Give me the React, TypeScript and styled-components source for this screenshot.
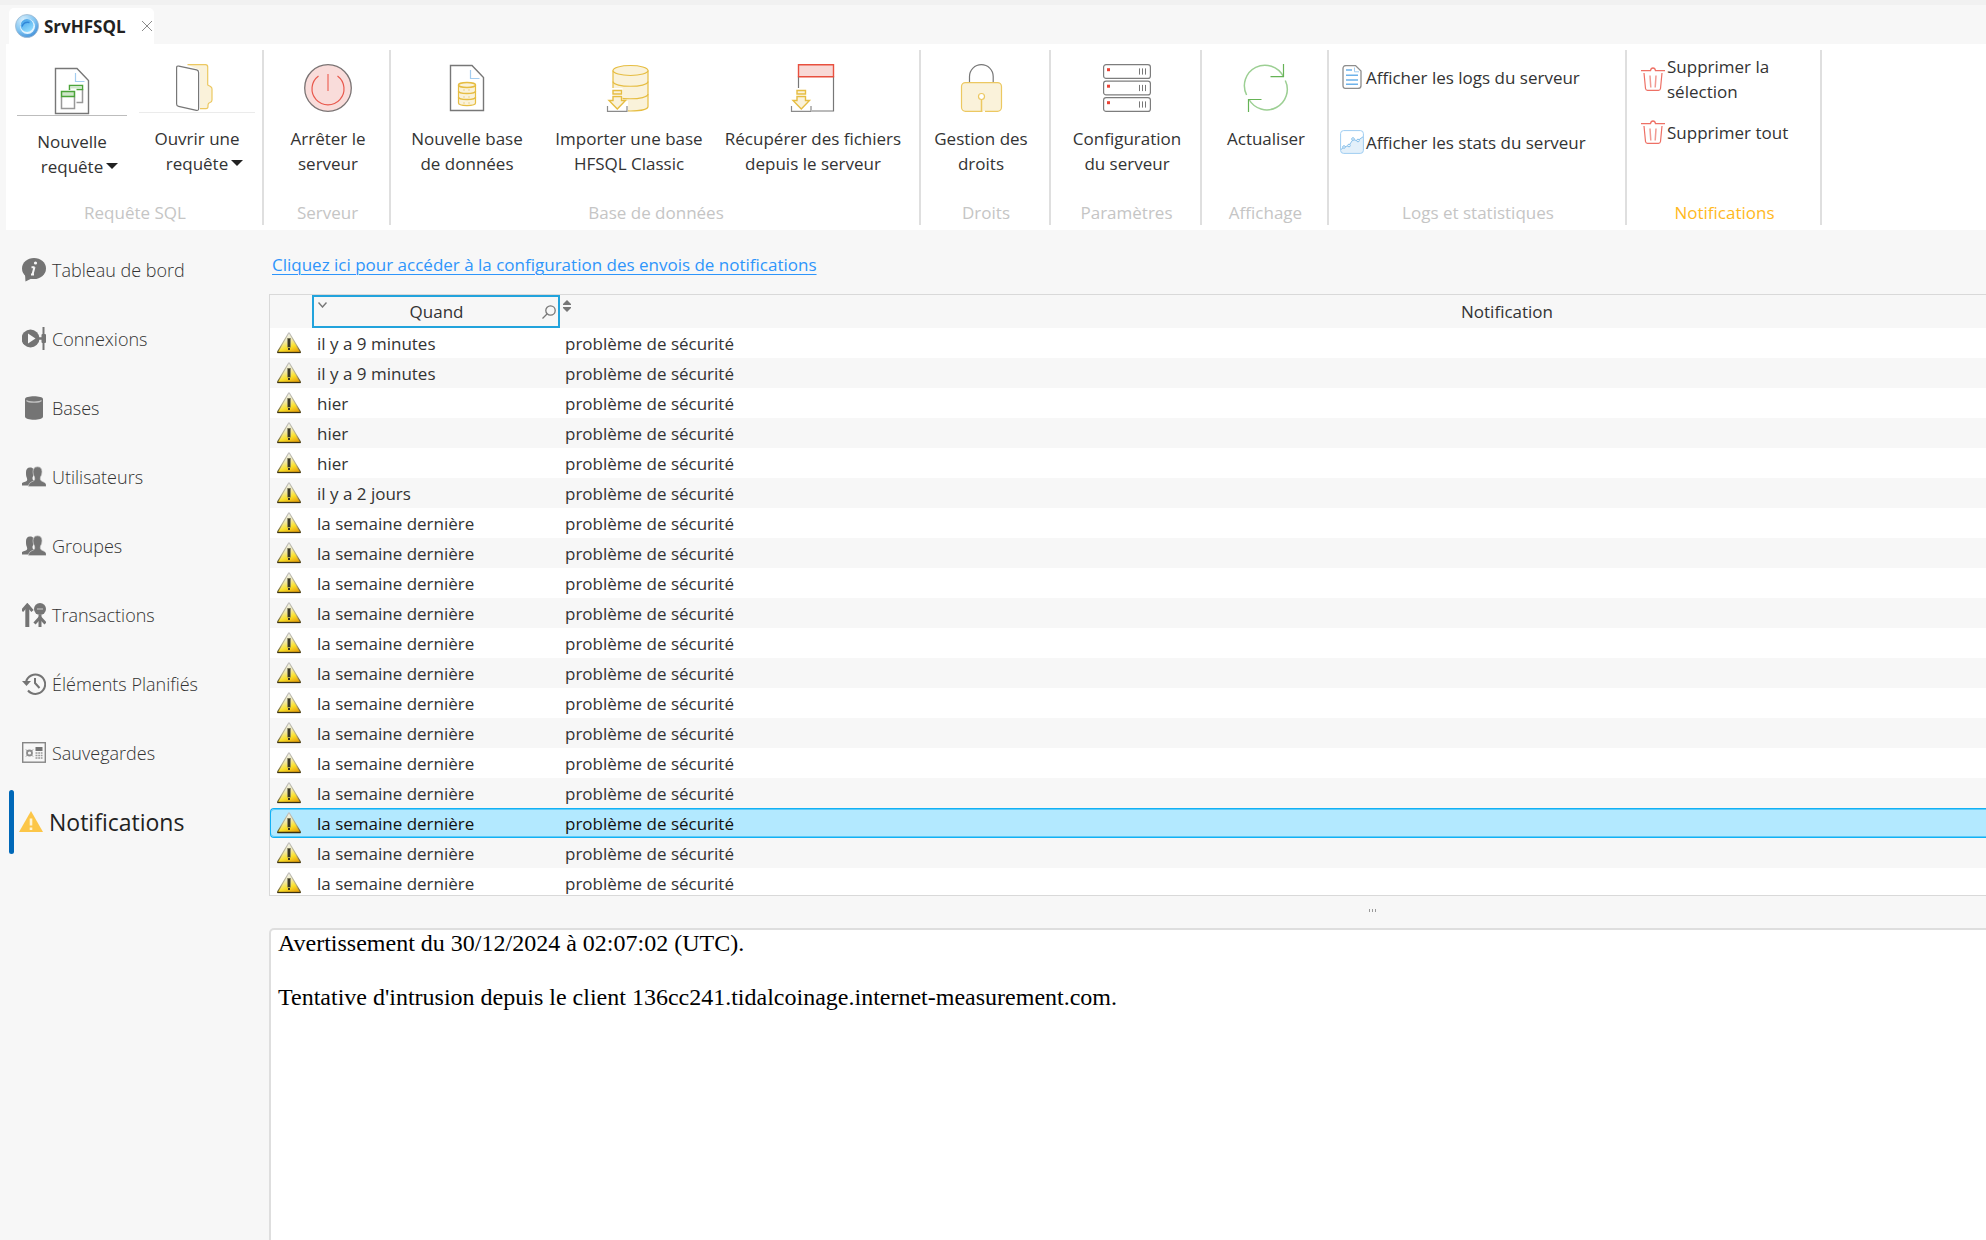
import React from "react";
import styled, { createGlobalStyle, css } from "styled-components";

const GlobalStyle = createGlobalStyle`
  *, *::before, *::after { box-sizing: border-box; }
  html, body { margin: 0; }
  body {
    background: #f7f7f7;
    color: #333;
    font-family: "Open Sans", "Noto Sans", sans-serif;
    font-size: 17px;
    line-height: 25px;
    overflow: hidden;
  }
  button {
    font: inherit;
    color: inherit;
    background: none;
    border: 0;
    padding: 0;
    margin: 0;
    cursor: pointer;
  }
  svg { display: block; flex: none; }
`;

/* ---------- layout ---------- */

const Window = styled.div`
  display: flex;
  flex-direction: column;
  height: 100vh;
  border-top: 5px solid #f1f1f1;
`;

const TabBar = styled.div`
  display: flex;
  padding: 3px 9px 0;
  flex: none;
`;

const Tab = styled.div`
  display: flex;
  align-items: center;
  height: 36px;
  padding: 0 2px 0 6px;
  background: #fff;
  border-radius: 5px 5px 0 0;
`;

const TabTitle = styled.button`
  display: flex;
  align-items: center;
  gap: 5px;
  width: 127px;
  line-height: 27px;
  font-weight: 700;
  color: #222;
`;

const CloseButton = styled.button`
  width: 10px;
  height: 10px;
`;

const Ribbon = styled.div`
  display: flex;
  flex: none;
  margin-left: 6px;
  padding: 6px 0 5px;
  background: #fff;
`;

const Group = styled.section<{ $width: number }>`
  display: flex;
  flex-direction: column;
  justify-content: space-between;
  width: ${(p) => p.$width}px;
  height: 175px;
  border-right: 2px solid #dfdfdf;
`;

const GroupName = styled.h2<{ $active?: boolean }>`
  margin: 0;
  padding-left: 2px;
  font-size: 17px;
  font-weight: 400;
  line-height: 25px;
  text-align: center;
  color: ${(p) => (p.$active ? "#ffb91d" : "#c5c5c5")};
`;

const BigTools = styled.div<{ $start: number; $gap?: number }>`
  display: flex;
  gap: ${(p) => p.$gap ?? 0}px;
  padding: 14px 0 0 ${(p) => p.$start}px;
`;

const BigButton = styled.button<{ $width: number; $lowered?: boolean }>`
  display: flex;
  flex-direction: column;
  align-items: center;
  gap: 13px;
  width: ${(p) => p.$width}px;
  padding-top: ${(p) => (p.$lowered ? 3 : 0)}px;
  white-space: pre-line;
`;

const IconShelf = styled.span<{ $rule?: string }>`
  display: flex;
  justify-content: center;
  align-self: stretch;
  border-bottom: 1px solid ${(p) => p.$rule ?? "transparent"};
`;

const Caret = styled.span`
  display: inline-block;
  margin: 0 -15px 4px 3px;
  border: solid transparent;
  border-width: 6px 6px 0;
  border-top-color: #222;
`;

const SmallTools = styled.div<{ $top: number; $start: number; $gap: number }>`
  display: flex;
  flex-direction: column;
  align-items: flex-start;
  gap: ${(p) => p.$gap}px;
  padding: ${(p) => p.$top}px 0 0 ${(p) => p.$start}px;
`;

const SmallButton = styled.button<{ $width?: number }>`
  display: flex;
  align-items: center;
  gap: 2px;
  height: 50px;
  max-width: ${(p) => (p.$width ? `${p.$width}px` : "none")};
  text-align: left;
`;

const Body = styled.div`
  display: flex;
  flex: 1;
  min-height: 0;
`;

const Sidebar = styled.nav`
  display: flex;
  flex-direction: column;
  flex: none;
  width: 269px;
  padding-top: 5px;
`;

const NavLink = styled.a<{ $current?: boolean }>`
  display: flex;
  align-items: center;
  gap: 6px;
  height: 69px;
  padding-left: 22px;
  font-size: 18px;
  line-height: 27px;
  font-weight: 300;
  color: #333;
  text-decoration: none;
  span { padding-top: 2px; }
  ${(p) =>
    p.$current &&
    css`
      padding-left: 9px;
      font-size: 23px;
      font-weight: 400;
      color: #222;
      &::before {
        content: "";
        width: 5px;
        height: 64px;
        margin-right: -1px;
        border-radius: 3px;
        background: #0068b8;
      }
    `}
`;

const Main = styled.main`
  flex: 1;
  min-width: 0;
  overflow: hidden;
`;

/* The panes keep the width of the maximised window and are clipped on the right. */
const Panes = styled.div`
  display: flex;
  flex-direction: column;
  min-width: 2206px;
  height: 100%;
`;

const SettingsLine = styled.div`
  flex: none;
  height: 64px;
  padding: 22px 3px 0;
`;

const SettingsLink = styled.a`
  color: #2e95fb;
  text-decoration: underline;
  text-decoration-thickness: 1px;
  text-underline-offset: 3px;
`;

const TablePane = styled.div`
  flex: none;
  height: 602px;
  overflow: hidden;
  border: 1px solid #d9d9d9;
`;

const Table = styled.table`
  width: 100%;
  table-layout: fixed;
  border-collapse: separate;
  border-spacing: 0;
`;

const HeadCell = styled.th<{ $width?: number }>`
  width: ${(p) => (p.$width ? `${p.$width}px` : "auto")};
  height: 33px;
  padding: 0;
  font-weight: 400;
  text-align: center;
  vertical-align: middle;
`;

const SortedHead = styled.div`
  display: grid;
  grid-template-columns: 22px 1fr 22px;
  align-items: center;
  height: 33px;
  padding: 0 2px 0 3px;
  border: 2px solid #22a3dc;
`;

const TopButton = styled.button`
  align-self: start;
  justify-self: start;
  padding: 5px 0 0 1px;
`;

const SearchButton = styled.button`
  justify-self: end;
`;

const FreeHead = styled.div`
  display: grid;
  grid-template-columns: 14px 1fr 36px;
  align-items: center;
  height: 33px;
  padding-left: 2px;
`;

const Row = styled.tr<{ $selected?: boolean }>`
  background: #fff;
  &:nth-child(even) { background: #f7f7f7; }
  ${(p) =>
    p.$selected &&
    css`
      && { background: transparent; color: #111; }
      td {
        background: #b3e9ff;
        border: solid #12b1f5;
        border-width: 1px 0;
        box-shadow: inset 0 1px #5ecbf8, inset 0 -1px #5ecbf8;
      }
      td:first-child {
        padding-left: 6px;
        border-left-width: 1px;
        border-radius: 4px 0 0 4px;
      }
    `}
`;

const Cell = styled.td<{ $icon?: boolean }>`
  height: 30px;
  padding: 0 0 0 ${(p) => (p.$icon ? 7 : 5)}px;
  overflow: hidden;
  white-space: nowrap;
`;

const Splitter = styled.div`
  display: flex;
  justify-content: center;
  gap: 2px;
  flex: none;
  height: 32px;
  padding-top: 13px;
`;

const Grip = styled.i`
  width: 1px;
  height: 3px;
  background: #9a9a9a;
`;

const Detail = styled.article`
  flex: 1;
  padding: 0 7px;
  background: #fff;
  border: 2px solid #dedede;
  border-bottom: 0;
  border-radius: 5px 5px 0 0;
  color: #000;
  font-family: "Liberation Serif", "Times New Roman", serif;
  font-size: 24px;
  line-height: 27px;
`;

const DetailLine = styled.p`
  margin: 0 0 27px;
`;

/* ---------- tab and ribbon icons ---------- */

const OrbIcon = () => (
  <svg width="24" height="24" viewBox="0 0 24 24" fill="none">
    <defs>
      <radialGradient id="orbRim" cx="0.35" cy="0.25" r="0.9">
        <stop offset="0" stopColor="#d8effc" />
        <stop offset="0.55" stopColor="#7fc4f2" />
        <stop offset="1" stopColor="#2a7bd0" />
      </radialGradient>
      <linearGradient id="orbCore" x1="0" y1="0" x2="0.6" y2="1">
        <stop offset="0" stopColor="#3d9be6" />
        <stop offset="1" stopColor="#8fdcff" />
      </linearGradient>
    </defs>
    <circle cx="12" cy="12" r="11.5" fill="url(#orbRim)" stroke="#9fb9cf" strokeWidth="0.8" />
    <circle cx="12.5" cy="12.5" r="7.5" fill="#e3f4ff" />
    <circle cx="12" cy="11.500" r="6.500" fill="url(#orbCore)" />
    <path d="M7 12.500c1-3.500 4-5 7.500-4" stroke="#2f86d8" strokeWidth="1.500" />
  </svg>
);

const CloseIcon = () => (
  <svg width="10" height="10" viewBox="0 0 10 10" stroke="#8a8a8a">
    <path d="M0 0l10 10M10 0L0 10" />
  </svg>
);

const Big = ({ children }: { children: React.ReactNode }) => (
  <svg width="48" height="48" viewBox="0 0 48 48" fill="none" strokeWidth="1.2">
    {children}
  </svg>
);

const Sheet = () => (
  <>
    <path d="M7.500 1.500h21.500l11.500 12v33h-33z" stroke="#777" fill="#fff" strokeWidth="1.4" />
    <path d="M27.500 6v8.500h9" stroke="#a3cdf0" />
  </>
);

const NewQueryIcon = () => (
  <Big>
    <Sheet />
    <path d="M34.500 22v13.500h-6" stroke="#999" strokeWidth="1.500" />
    <path d="M21.500 23v-4.500h13v4h-6" stroke="#4ba43a" strokeWidth="1.500" />
    <path d="M22 19.500h12v2h-12z" fill="#cfe6ca" />
    <path d="M13.500 30v11.500h13V30" stroke="#999" strokeWidth="1.500" />
    <path d="M13.500 24.500h13v5h-13z" stroke="#4ba43a" fill="#cfe6ca" strokeWidth="1.500" />
  </Big>
);

const FolderIcon = () => (
  <Big>
    <path
      d="M14.500.7H32.500q2.200 0 2.200 2.200V21l2.800 1.500q1.500 1 1.500 2.500V36q0 2-2 2.500t-2 2.500v1.500q0 2.200-2 2.200h-6V7.500q0-1.500-1.500-2z"
      fill="#faf2da"
    />
    <path
      d="M14.500.7H32.500q2.200 0 2.200 2.200V21l2.800 1.500q1.500 1 1.500 2.500V36q0 2-2 2.500t-2 2.500v1.500q0 2.200-2 2.200h-6"
      stroke="#ecc861"
    />
    <path d="M3.600 4q0-2.400 2.200-1.900l17.800 3.800q2 .5 2 2.500v36q0 2.500-2.200 2L5.600 42.300q-2-.5-2-2.400z" stroke="#777" fill="#fff" />
  </Big>
);

const PowerIcon = () => (
  <Big>
    <circle cx="24" cy="24" r="23.300" fill="#f9dcda" stroke="#7b7474" strokeWidth="1.300" />
    <path d="M14.500 12a16 16 0 1 0 19 0" stroke="#e9594d" />
    <path d="M24 10v17" stroke="#f2958d" strokeWidth="2" />
  </Big>
);

const NewBaseIcon = () => (
  <Big>
    <Sheet />
    <path d="M15.500 21v18c0 3.400 17 3.400 17 0V21" fill="#faf2da" stroke="#e6bd42" />
    <ellipse cx="24" cy="21" rx="8.500" ry="2.500" fill="#faf2da" stroke="#e6bd42" strokeWidth="1.500" />
    <path d="M15.500 27c0 3.400 17 3.400 17 0M15.500 33c0 3.400 17 3.400 17 0" stroke="#e6bd42" strokeWidth="1.500" />
    <path d="M20 26h2m3 0h2M20 33h2m3 0h2M20 39h2m3 0h2" stroke="#efd68a" />
  </Big>
);

const DownloadMark = () => (
  <>
    <path d="M0 24h17.500v13H23v11H0z" fill="#fff" />
    <path d="M8 26.500h8.500V30H8zM8 32.500h8.500v4h4L12.300 45 4 36.500h4z" fill="#faf2da" stroke="#e6bd42" strokeWidth="1.400" />
    <path d="M2.500 42v5.300h19.500V42" stroke="#8b8b8b" />
  </>
);

const ImportBaseIcon = () => (
  <Big>
    <path d="M8 6.500v36c0 6 35 6 35 0v-36" fill="#faf2da" stroke="#e6bd42" />
    <ellipse cx="25.500" cy="6.500" rx="17.500" ry="5" fill="#faf2da" stroke="#e6bd42" />
    <path d="M8 17.500c0 6.300 35 6.300 35 0M8 30c0 6.300 35 6.300 35 0" stroke="#e6bd42" />
    <DownloadMark />
  </Big>
);

const FetchFilesIcon = () => (
  <Big>
    <path d="M9.500 12v35h35V12" fill="#fff" stroke="#777" />
    <path d="M9.500.7h35v12h-35z" fill="#f8d9d6" stroke="#e8503f" strokeWidth="1.400" />
    <DownloadMark />
  </Big>
);

const LockIcon = () => (
  <Big>
    <path d="M12.500 20v-7.500a11.800 11.800 0 0 1 23.700 0V20" stroke="#777" />
    <rect x="4.500" y="18.600" width="40" height="28.700" rx="4" fill="#faf2da" stroke="#ecc861" />
    <path d="M24.500 35v12" stroke="#ecc861" strokeWidth="1.500" />
    <path d="M25.500 47.300h2.500" stroke="#fff" strokeWidth="1.500" />
    <circle cx="24.500" cy="32.500" r="3" fill="#fff" stroke="#ecc861" />
  </Big>
);

const ServerIcon = () => (
  <Big>
    {[0.6, 17.1, 33.6].map((y) => (
      <g key={y}>
        <rect x="0.600" y={y} width="46.800" height="13.800" rx="2.500" fill="#fff" stroke="#7d7d7d" />
        <rect x="4" y={y + 3.6} width="3" height="3" fill="#ea4335" />
        <path d={`M36.500 ${y + 3.8}v6.200M39.500 ${y + 3.8}v6.200M42.500 ${y + 3.8}v6.200`} stroke="#777" strokeWidth="1" />
      </g>
    ))}
  </Big>
);

const RefreshIcon = () => (
  <Big>
    <path d="M43.300 16.500A20.500 20.500 0 0 1 7 35.500M4.600 31A20.500 20.500 0 0 1 41.300 12.500" stroke="#9ccf93" strokeWidth="1.500" />
    <path d="M41.500 0v12.700h-13M6.500 48V35.500h13" stroke="#66b356" />
  </Big>
);

const Small = ({ children }: { children: React.ReactNode }) => (
  <svg width="24" height="24" viewBox="0 0 24 24" fill="none">
    {children}
  </svg>
);

const LogsIcon = () => (
  <Small>
    <path d="M6 .6h9.500L21 6v14.400q0 3-3 3H6q-3 0-3-3V3.600q0-3 3-3z" stroke="#8d8d8d" fill="#fff" strokeWidth="1.300" />
    <path d="M14.500 2.500v4.300h4.500" stroke="#a3cdf0" />
    <path d="M6 5h6M6 10.200h12M6 15h12M6 19.300h12" stroke="#6db2ea" strokeWidth="1.600" />
  </Small>
);

const StatsIcon = () => (
  <Small>
    <path d="M.6 19.500l4-2.500 5-1.500 3.500-6 4.500 1.300 5.800-4.300v14q0 2.900-2.900 2.900h-17Q.6 23.400.6 20.500z" fill="#e3f0fa" />
    <rect x="0.600" y="0.600" width="22.800" height="22.800" rx="3" stroke="#9fcdf1" />
    <path d="M1 19.500l3-2.500 5-1.500 4-6 4.500 1.300 5.500-4" stroke="#86bfea" />
    <g fill="#fff" stroke="#86bfea">
      <circle cx="4" cy="17" r="1.300" />
      <circle cx="9" cy="15.500" r="1.300" />
      <circle cx="13" cy="9" r="1.300" />
      <circle cx="18" cy="10.500" r="1.300" />
    </g>
  </Small>
);

const TrashIcon = () => (
  <Small>
    <path d="M0 3.700h9.500Q10 1 12 1t2.500 2.700H24" stroke="#ee7065" strokeWidth="1.300" />
    <path d="M3 6l1.500 15.500q.3 1.800 2 1.800h11q1.700 0 2-1.800L21 6" stroke="#ee7065" strokeWidth="1.200" />
    <path d="M9 8.500l.8 12M15 8.500l-.8 12" stroke="#f19a92" strokeWidth="1.500" />
  </Small>
);

/* ---------- navigation icons ---------- */

const GREY = "#747474";

const InfoIcon = () => (
  <Small>
    <ellipse cx="12" cy="10.500" rx="12" ry="10.500" fill={GREY} />
    <path d="M3 16.500l.5 7 7-3.500z" fill={GREY} />
    <path d="M12.500 9l-2 7.500M9.500 9.200h3M9 16.500h3" stroke="#f7f7f7" strokeWidth="2" />
    <circle cx="13.500" cy="5" r="1.600" fill="#f7f7f7" />
  </Small>
);

const ConnectionIcon = () => (
  <Small>
    <circle cx="8.500" cy="11.500" r="9" fill={GREY} />
    <path d="M6 6.500l7.500 5L6 16.500z" fill="#f7f7f7" />
    <path d="M17 11.500h3" stroke={GREY} strokeWidth="2.500" />
    <path d="M21.500 0v23" stroke={GREY} strokeWidth="2" />
    <rect x="19.500" y="7" width="4.500" height="9" rx="1" fill={GREY} />
  </Small>
);

const BaseIcon = () => (
  <Small>
    <path d="M3 3C3-.8 21-.8 21 3v17.500c0 4.300-18 4.300-18 0z" fill={GREY} />
    <path d="M4.500 4.500c2 2.200 13 2.200 15 0" stroke="#c4c4c4" strokeWidth="1.200" />
  </Small>
);

const PeopleIcon = () => (
  <Small>
    <path d="M8 2.500c3 0 4 2 4 4.500 0 2.700-1 4-1.500 5.500 0 2 0 2 1.500 3v5H0v-2.500c2-1 4.500-1.500 5-2.500s0-2-.3-3C4 11 4 9 4 7c0-2.500 1.500-4.500 4-4.500z" fill={GREY} />
    <path
      d="M15.500 1.800c3 0 4.500 2 4.500 4.700 0 2-.5 4-1.500 5.500-.5 3 0 3.500 1.500 4.200 3 1.300 4.500 2.300 4.500 5.300H6.500c0-3 1.500-4 4.500-5.300 1.500-.7 2-1.200 1.500-4.200-1-1.500-1.500-3.500-1.500-5.500 0-2.700 1.500-4.700 4.500-4.700z"
      fill={GREY}
      stroke="#d0d0d0"
      strokeWidth="0.700"
    />
  </Small>
);

const TransactionIcon = () => (
  <Small>
    <path d="M5.300 24V2" stroke={GREY} strokeWidth="4" />
    <path d="M0 8l5.300-6 5.200 6" stroke={GREY} strokeWidth="3" />
    <circle cx="18" cy="6" r="6" fill={GREY} />
    <path d="M15 6h6" stroke="#a8a8a8" strokeWidth="1.800" />
    <path d="M18 12v12" stroke={GREY} strokeWidth="3" />
    <path d="M12.500 20.500l5.500-6 5.500 6" stroke={GREY} strokeWidth="3" />
  </Small>
);

const HistoryIcon = () => (
  <Small>
    <path d="M4 10A9.700 9.700 0 1 1 6 18.500" stroke={GREY} strokeWidth="2" />
    <path d="M0 9h9l-4.500 5z" fill={GREY} />
    <path d="M13 6v5l4.500 5" stroke={GREY} strokeWidth="2" />
  </Small>
);

const BackupIcon = () => (
  <Small>
    <rect x="0.700" y="1.700" width="22.600" height="19.500" stroke="#868686" strokeWidth="1.400" />
    <circle cx="7.500" cy="12" r="2.500" stroke="#8d8d8d" strokeWidth="1.800" />
    <path d="M4 8.500l1.500 1.500M11 8.500L9.500 10M4 15.500L5.500 14M11 15.500L9.500 14" stroke="#8d8d8d" />
    <path d="M13.500 6H20.500v4h-7z" fill={GREY} />
    <path d="M13.500 12h7M13.500 14.500h7M13.500 17h7" stroke="#999" strokeWidth="1.500" strokeDasharray="2 .7" />
  </Small>
);

const AlertIcon = () => (
  <Small>
    <path d="M12 1l12 21H0z" fill="#fcc648" />
    <path d="M12 8.500v7M12 17.500V20" stroke="#fff4d6" strokeWidth="2.600" />
  </Small>
);

/* ---------- table icons ---------- */

const WarningIcon = () => (
  <svg width="24" height="22" viewBox="0 0 24 22" fill="none" role="img" aria-label="Avertissement">
    <defs>
      <linearGradient id="warnFill" x1="0.300" y1="0" x2="0.700" y2="1">
        <stop offset="0" stopColor="#f1f1f1" />
        <stop offset="0.350" stopColor="#f0ecc4" />
        <stop offset="0.700" stopColor="#fbe12c" />
        <stop offset="1" stopColor="#e6a50c" />
      </linearGradient>
      <linearGradient id="warnEdge" x1="0" y1="0" x2="0" y2="1">
        <stop offset="0" stopColor="#c0c0c0" />
        <stop offset="0.600" stopColor="#b5ae80" />
        <stop offset="1" stopColor="#5a4d1c" />
      </linearGradient>
    </defs>
    <path d="M11.500 1.200q.5-.8 1 0L23.200 19.500v1H.8v-1z" fill="url(#warnFill)" stroke="url(#warnEdge)" strokeWidth="1.100" />
    <path d="M.5 20.500h23" stroke="#3a3012" strokeWidth="1.300" />
    <path d="M12 6v9.500" stroke="#77745a" strokeWidth="3.500" />
    <path d="M12 7v8M12 16v2" stroke="#3a3824" strokeWidth="2" />
  </svg>
);

const ChevronIcon = () => (
  <svg width="9" height="6" viewBox="0 0 9 6" fill="none" stroke="#777" strokeWidth="1.400">
    <path d="M.5.5l4 4.500 4-4.500" />
  </svg>
);

const SearchIcon = () => (
  <svg width="14" height="14" viewBox="0 0 14 14" fill="none" stroke="#777" strokeWidth="1.300">
    <circle cx="8.500" cy="5.500" r="4.700" />
    <path d="M5 9L.5 13.500" />
  </svg>
);

const SortIcon = () => (
  <svg width="8" height="12" viewBox="0 0 8 12" fill="#777">
    <path d="M4 0l4 4v1H0V4zM0 7h8v1l-4 4-4-4z" />
  </svg>
);

/* ---------- data ---------- */

const navigation = [
  { label: "Tableau de bord", icon: <InfoIcon /> },
  { label: "Connexions", icon: <ConnectionIcon /> },
  { label: "Bases", icon: <BaseIcon /> },
  { label: "Utilisateurs", icon: <PeopleIcon /> },
  { label: "Groupes", icon: <PeopleIcon /> },
  { label: "Transactions", icon: <TransactionIcon /> },
  { label: "Éléments Planifiés", icon: <HistoryIcon /> },
  { label: "Sauvegardes", icon: <BackupIcon /> },
  { label: "Notifications", icon: <AlertIcon />, current: true },
];

const notifications = [
  "il y a 9 minutes",
  "il y a 9 minutes",
  "hier",
  "hier",
  "hier",
  "il y a 2 jours",
  ...Array<string>(13).fill("la semaine dernière"),
];

const SELECTED = 16;

interface ToolProps {
  label: string;
  icon: React.ReactNode;
  width: number;
  menu?: boolean;
  rule?: string;
  lowered?: boolean;
}

const Tool = ({ label, icon, width, menu, rule, lowered }: ToolProps) => (
  <BigButton type="button" $width={width} $lowered={lowered}>
    <IconShelf $rule={rule}>{icon}</IconShelf>
    <span>
      {label}
      {menu && <Caret />}
    </span>
  </BigButton>
);

export default function App() {
  return (
    <Window>
      <GlobalStyle />
      <TabBar>
        <Tab>
          <TabTitle type="button">
            <OrbIcon />
            SrvHFSQL
          </TabTitle>
          <CloseButton type="button" aria-label="Fermer">
            <CloseIcon />
          </CloseButton>
        </Tab>
      </TabBar>

      <Ribbon>
        <Group $width={258}>
          <BigTools $start={11} $gap={12}>
            <Tool label={"Nouvelle\nrequête"} icon={<NewQueryIcon />} width={110} rule="#bdbdbd" menu lowered />
            <Tool label={"Ouvrir une\nrequête"} icon={<FolderIcon />} width={116} rule="#ebebeb" menu />
          </BigTools>
          <GroupName>Requête SQL</GroupName>
        </Group>
        <Group $width={127}>
          <BigTools $start={9}>
            <Tool label={"Arrêter le\nserveur"} icon={<PowerIcon />} width={110} />
          </BigTools>
          <GroupName>Serveur</GroupName>
        </Group>
        <Group $width={530}>
          <BigTools $start={5}>
            <Tool label={"Nouvelle base\nde données"} icon={<NewBaseIcon />} width={142} />
            <Tool label={"Importer une base\nHFSQL Classic"} icon={<ImportBaseIcon />} width={182} />
            <Tool label={"Récupérer des fichiers\ndepuis le serveur"} icon={<FetchFilesIcon />} width={186} />
          </BigTools>
          <GroupName>Base de données</GroupName>
        </Group>
        <Group $width={130}>
          <BigTools $start={0}>
            <Tool label={"Gestion des\ndroits"} icon={<LockIcon />} width={120} />
          </BigTools>
          <GroupName>Droits</GroupName>
        </Group>
        <Group $width={151}>
          <BigTools $start={9}>
            <Tool label={"Configuration\ndu serveur"} icon={<ServerIcon />} width={134} />
          </BigTools>
          <GroupName>Paramètres</GroupName>
        </Group>
        <Group $width={127}>
          <BigTools $start={9}>
            <Tool label="Actualiser" icon={<RefreshIcon />} width={110} />
          </BigTools>
          <GroupName>Affichage</GroupName>
        </Group>
        <Group $width={298}>
          <SmallTools $top={2} $start={11} $gap={15}>
            <SmallButton type="button">
              <LogsIcon />
              Afficher les logs du serveur
            </SmallButton>
            <SmallButton type="button">
              <StatsIcon />
              Afficher les stats du serveur
            </SmallButton>
          </SmallTools>
          <GroupName>Logs et statistiques</GroupName>
        </Group>
        <Group $width={195}>
          <SmallTools $top={4} $start={14} $gap={3}>
            <SmallButton type="button" $width={140}>
              <TrashIcon />
              Supprimer la sélection
            </SmallButton>
            <SmallButton type="button">
              <TrashIcon />
              Supprimer tout
            </SmallButton>
          </SmallTools>
          <GroupName $active>Notifications</GroupName>
        </Group>
      </Ribbon>

      <Body>
        <Sidebar>
          {navigation.map((item) => (
            <NavLink
              key={item.label}
              href="#"
              $current={item.current}
              aria-current={item.current ? "page" : undefined}
            >
              {item.icon}
              <span>{item.label}</span>
            </NavLink>
          ))}
        </Sidebar>

        <Main>
          <Panes>
            <SettingsLine>
              <SettingsLink href="#">
                Cliquez ici pour accéder à la configuration des envois de notifications
              </SettingsLink>
            </SettingsLine>

            <TablePane>
              <Table>
                <thead>
                  <tr>
                    <HeadCell $width={42} aria-label="Type" />
                    <HeadCell $width={248} scope="col" aria-sort="descending">
                      <SortedHead>
                        <TopButton type="button" aria-label="Trier">
                          <ChevronIcon />
                        </TopButton>
                        <span>Quand</span>
                        <SearchButton type="button" aria-label="Rechercher">
                          <SearchIcon />
                        </SearchButton>
                      </SortedHead>
                    </HeadCell>
                    <HeadCell scope="col">
                      <FreeHead>
                        <TopButton type="button" aria-label="Trier">
                          <SortIcon />
                        </TopButton>
                        <span>Notification</span>
                      </FreeHead>
                    </HeadCell>
                  </tr>
                </thead>
                <tbody>
                  {notifications.map((when, index) => (
                    <Row key={index} $selected={index === SELECTED} aria-selected={index === SELECTED}>
                      <Cell $icon>
                        <WarningIcon />
                      </Cell>
                      <Cell>{when}</Cell>
                      <Cell>problème de sécurité</Cell>
                    </Row>
                  ))}
                </tbody>
              </Table>
            </TablePane>

            <Splitter>
              <Grip />
              <Grip />
              <Grip />
            </Splitter>

            <Detail>
              <DetailLine>Avertissement du 30/12/2024 à 02:07:02 (UTC).</DetailLine>
              <DetailLine>
                Tentative d'intrusion depuis le client 136cc241.tidalcoinage.internet-measurement.com.
              </DetailLine>
            </Detail>
          </Panes>
        </Main>
      </Body>
    </Window>
  );
}
